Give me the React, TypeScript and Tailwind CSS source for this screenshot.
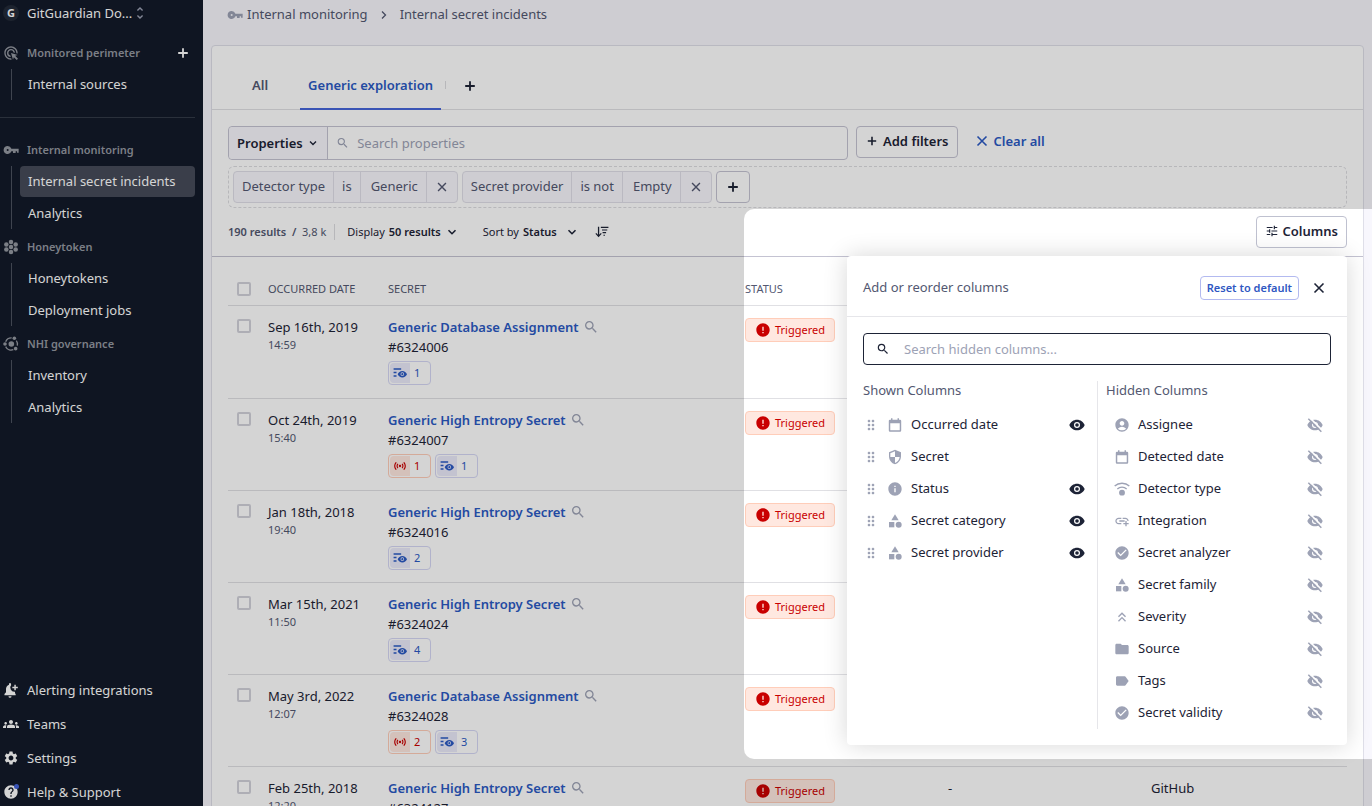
import { useState, type ComponentType, type ReactNode } from "react";
import clsx from "clsx";
import {
  MdAccountCircle,
  MdAddLink,
  MdAdsClick,
  MdCategory,
  MdCheckCircle,
  MdDragIndicator,
  MdError,
  MdFolder,
  MdGroups,
  MdHelp,
  MdInfo,
  MdKeyboardDoubleArrowUp,
  MdLabel,
  MdSearch,
  MdSecurity,
  MdSensors,
  MdSettings,
  MdTune,
  MdUnfoldMore,
} from "react-icons/md";

type IconType = ComponentType<{ className?: string }>;

// ─── Custom icons ────────────────────────────────────────────────────────────

function PlusIcon({ className }: { className?: string }) {
  return (
    <svg viewBox="0 0 16 16" stroke="currentColor" strokeWidth="1.8" className={className}>
      <path d="M8 3.200v9.600M3.200 8h9.600" />
    </svg>
  );
}

function CrossIcon({ className }: { className?: string }) {
  return (
    <svg viewBox="0 0 16 16" stroke="currentColor" strokeWidth="1.600" className={className}>
      <path d="M3.500 3.500l9 9M12.500 3.500l-9 9" />
    </svg>
  );
}

function ChevronDownIcon({ className }: { className?: string }) {
  return (
    <svg viewBox="0 0 16 16" fill="none" stroke="currentColor" strokeWidth="1.800" className={className}>
      <path d="M4 6l4 4 4-4" />
    </svg>
  );
}

function ChevronRightIcon({ className }: { className?: string }) {
  return (
    <svg viewBox="0 0 16 16" fill="none" stroke="currentColor" strokeWidth="1.300" className={className}>
      <path d="M6 4.500L9.500 8 6 11.500" />
    </svg>
  );
}

function KeyIcon({ className }: { className?: string }) {
  return (
    <svg viewBox="0 0 24 24" fill="currentColor" className={className}>
      <path
        fillRule="evenodd"
        d="M7 6a6 6 0 1 0 5.600 8H15v2.500h4V14h2v2h2.500V10H12.600A6 6 0 0 0 7 6zm0 7.500a1.500 1.500 0 1 1 0-3 1.500 1.500 0 0 1 0 3z"
      />
    </svg>
  );
}

function CalendarIcon({ className }: { className?: string }) {
  return (
    <svg viewBox="0 0 24 24" fill="currentColor" className={className}>
      <path
        fillRule="evenodd"
        d="M6 2h2.200v2h7.600V2H18v2h1.500A1.800 1.800 0 0 1 21.300 5.800v14.400a1.800 1.800 0 0 1-1.800 1.800h-15a1.800 1.800 0 0 1-1.800-1.800V5.800A1.800 1.800 0 0 1 4.500 4H6zM4.900 9.500v10.300h14.200V9.500z"
      />
    </svg>
  );
}

function EyeIcon({ className }: { className?: string }) {
  return (
    <svg viewBox="0 0 24 24" fill="currentColor" className={className}>
      <path
        fillRule="evenodd"
        d="M12 4C6.800 4 2.300 7.200.5 12c1.800 4.800 6.300 8 11.500 8s9.700-3.200 11.500-8C21.700 7.200 17.200 4 12 4zm0 12.500a4.500 4.500 0 1 1 0-9 4.500 4.500 0 0 1 0 9z"
      />
      <circle cx="12" cy="12" r="2.700" />
    </svg>
  );
}

function EyeOffIcon({ className }: { className?: string }) {
  return (
    <svg viewBox="0 0 24 24" fill="none" className={className}>
      <path
        fill="currentColor"
        fillRule="evenodd"
        d="M12 4C6.800 4 2.300 7.200.5 12c1.800 4.800 6.300 8 11.500 8s9.700-3.200 11.500-8C21.700 7.200 17.200 4 12 4zm0 12.500a4.500 4.500 0 1 1 0-9 4.500 4.500 0 0 1 0 9z"
      />
      <circle cx="12" cy="12" r="2.700" fill="currentColor" />
      <path d="M3.500.5l20 20" stroke="#fff" strokeWidth="2.400" />
      <path d="M2 2.500l19.500 19.500" stroke="currentColor" strokeWidth="2.200" />
    </svg>
  );
}

function HoneycombIcon({ className }: { className?: string }) {
  return (
    <svg viewBox="0 0 24 24" fill="currentColor" className={className}>
      <circle cx="12" cy="12" r="3.4" />
      <circle cx="12" cy="4.4" r="3.4" />
      <circle cx="12" cy="19.6" r="3.4" />
      <circle cx="5" cy="8.2" r="3.4" />
      <circle cx="19" cy="8.2" r="3.4" />
      <circle cx="5" cy="15.8" r="3.4" />
      <circle cx="19" cy="15.8" r="3.4" />
    </svg>
  );
}

function OrbitIcon({ className }: { className?: string }) {
  return (
    <svg viewBox="0 0 24 24" fill="none" stroke="currentColor" strokeWidth="2" className={className}>
      <path d="M4 8.500A9.300 9.300 0 0 1 13 2.800M20 7A9.300 9.300 0 0 1 21.500 14.500M15.500 20.600A9.300 9.300 0 0 1 4 16" />
      <g fill="currentColor" stroke="none">
        <circle cx="12.5" cy="12" r="4.2" />
        <circle cx="17" cy="3.400" r="2.700" />
        <circle cx="3" cy="12" r="2.700" />
        <circle cx="19" cy="19" r="2.700" />
      </g>
    </svg>
  );
}

function BellPlusIcon({ className }: { className?: string }) {
  return (
    <svg viewBox="0 0 24 24" fill="currentColor" className={className}>
      <path d="M10.500 23.500a2.300 2.300 0 0 0 2.300-2.300H8.200a2.300 2.300 0 0 0 2.300 2.300zM18 14.500A6.200 6.200 0 0 1 12.500 4.200L12 4V3a1.500 1.500 0 0 0-3 0v1C6 5 4.500 7.500 4.500 10.500V15.500L2.200 18V20H19V18l-1-1z" />
      <path d="M17 4h2.200v3h3v2.200h-3v3H17v-3h-3V7h3z" />
    </svg>
  );
}

function SortDescIcon({ className }: { className?: string }) {
  return (
    <svg viewBox="0 0 24 24" fill="currentColor" className={className}>
      <path d="M5 3h2.200v13.500L10 13.700l1.500 1.500L6.100 21 .7 15.200l1.500-1.500L5 16.500z" />
      <path d="M10 3h13v2H10zM12 7.500h9v2h-9zM13 12h6v2h-6zM14.500 16.500h2.500v2h-2.500z" />
    </svg>
  );
}

function ListEyeIcon({ className }: { className?: string }) {
  return (
    <svg viewBox="0 0 24 24" fill="currentColor" className={className}>
      <path d="M1 4h13v2.400H1zM1 10h5v2.400H1zM1 16h5v2.400H1z" />
      <path
        fillRule="evenodd"
        d="M16 8.500c-3.600 0-6.700 2.300-8 5.500 1.300 3.200 4.400 5.500 8 5.500s6.700-2.300 8-5.500c-1.300-3.200-4.400-5.500-8-5.500zm0 8.600a3.100 3.100 0 1 1 0-6.200 3.100 3.100 0 0 1 0 6.200z"
      />
      <circle cx="16" cy="14" r="1.800" />
    </svg>
  );
}

function DetectorIcon({ className }: { className?: string }) {
  return (
    <svg viewBox="0 0 24 24" fill="none" stroke="currentColor" strokeWidth="2" className={className}>
      <path d="M1 7.500C7 2 17 2 23 7.500M5 12c4-3.600 10-3.600 14 0" />
      <circle cx="12" cy="17.500" r="4.400" fill="currentColor" stroke="none" />
    </svg>
  );
}

// ─── Data ────────────────────────────────────────────────────────────────────

const SECTIONS: { title: string; icon: IconType; items: string[] }[] = [
  { title: "Internal monitoring", icon: KeyIcon, items: ["Internal secret incidents", "Analytics"] },
  { title: "Honeytoken", icon: HoneycombIcon, items: ["Honeytokens", "Deployment jobs"] },
  { title: "NHI governance", icon: OrbitIcon, items: ["Inventory", "Analytics"] },
];

const FOOTER_LINKS: { label: string; icon: IconType; dot?: boolean }[] = [
  { label: "Alerting integrations", icon: BellPlusIcon },
  { label: "Teams", icon: MdGroups },
  { label: "Settings", icon: MdSettings },
  { label: "Help & Support", icon: MdHelp, dot: true },
];

const INCIDENTS: {
  date: string;
  time: string;
  name: string;
  id: string;
  leaks?: number;
  seen?: number;
  category?: string;
  provider?: string;
}[] = [
  { date: "Sep 16th, 2019", time: "14:59", name: "Generic Database Assignment", id: "#6324006", seen: 1 },
  { date: "Oct 24th, 2019", time: "15:40", name: "Generic High Entropy Secret", id: "#6324007", leaks: 1, seen: 1 },
  { date: "Jan 18th, 2018", time: "19:40", name: "Generic High Entropy Secret", id: "#6324016", seen: 2 },
  { date: "Mar 15th, 2021", time: "11:50", name: "Generic High Entropy Secret", id: "#6324024", seen: 4 },
  { date: "May 3rd, 2022", time: "12:07", name: "Generic Database Assignment", id: "#6324028", leaks: 2, seen: 3 },
  {
    date: "Feb 25th, 2018",
    time: "12:20",
    name: "Generic High Entropy Secret",
    id: "#6324127",
    category: "-",
    provider: "GitHub",
  },
];

const SHOWN_COLUMNS: { label: string; icon: IconType; locked?: boolean }[] = [
  { label: "Occurred date", icon: CalendarIcon },
  { label: "Secret", icon: MdSecurity, locked: true },
  { label: "Status", icon: MdInfo },
  { label: "Secret category", icon: MdCategory },
  { label: "Secret provider", icon: MdCategory },
];

const HIDDEN_COLUMNS: { label: string; icon: IconType }[] = [
  { label: "Assignee", icon: MdAccountCircle },
  { label: "Detected date", icon: CalendarIcon },
  { label: "Detector type", icon: DetectorIcon },
  { label: "Integration", icon: MdAddLink },
  { label: "Secret analyzer", icon: MdCheckCircle },
  { label: "Secret family", icon: MdCategory },
  { label: "Severity", icon: MdKeyboardDoubleArrowUp },
  { label: "Source", icon: MdFolder },
  { label: "Tags", icon: MdLabel },
  { label: "Secret validity", icon: MdCheckCircle },
];

// ─── Sidebar ─────────────────────────────────────────────────────────────────

function SectionHeader({ icon: Icon, children }: { icon: IconType; children: ReactNode }) {
  return (
    <div className="flex h-[34px] items-center gap-2 pt-[2px] pl-[3px] text-[11px] font-semibold text-[#9599a2]">
      <Icon className="size-4 shrink-0" />
      {children}
    </div>
  );
}

function NavItems({ items, active }: { items: string[]; active?: string }) {
  return (
    <ul className="ml-[11px] flex flex-col gap-px border-l border-[#4c5260] pl-2">
      {items.map((item) => (
        <li key={item}>
          <a
            href="#"
            className={clsx(
              "flex h-[31px] items-center rounded px-2 pb-[2px]",
              item === active && "bg-[#464b59]",
            )}
          >
            {item}
          </a>
        </li>
      ))}
    </ul>
  );
}

function Sidebar() {
  return (
    <aside className="flex w-[203px] shrink-0 flex-col bg-[#131a29] pr-2 text-white">
      <button type="button" className="flex h-[26px] shrink-0 items-center pl-[3px]">
        <span className="flex size-4 items-center justify-center rounded-full bg-[#242b39] text-[11px] font-bold">
          G
        </span>
        <span className="ml-2">GitGuardian Do...</span>
        <MdUnfoldMore className="size-4 text-[#9da2b5]" />
      </button>

      <nav className="mt-[9px]">
        <div className="flex items-center justify-between pr-1">
          <SectionHeader icon={MdAdsClick}>Monitored perimeter</SectionHeader>
          <button type="button" aria-label="Add perimeter" className="pt-[2px]">
            <PlusIcon className="size-4" />
          </button>
        </div>
        <NavItems items={["Internal sources"]} />
        <hr className="mt-[17px] mb-[14px] border-[#333a48]" />
        {SECTIONS.map(({ title, icon, items }) => (
          <section key={title}>
            <SectionHeader icon={icon}>{title}</SectionHeader>
            <NavItems items={items} active="Internal secret incidents" />
          </section>
        ))}
      </nav>

      <ul className="-mb-[3px] mt-auto">
        {FOOTER_LINKS.map(({ label, icon: Icon, dot }) => (
          <li key={label}>
            <a href="#" className="flex h-[34px] items-center gap-2 pl-[3px]">
              <span className="relative">
                <Icon className="size-4" />
                {dot && <span className="absolute top-0 right-0 size-[5px] rounded-full bg-[#4666da]" />}
              </span>
              {label}
            </a>
          </li>
        ))}
      </ul>
    </aside>
  );
}

// ─── Filters ─────────────────────────────────────────────────────────────────

function FilterChip({ field, operator, value }: { field: string; operator: string; value: string }) {
  return (
    <div className="flex h-8 divide-x divide-[#e0dfe8] rounded border border-[#e0dfe8] bg-[#f8f7fd] text-[#535871]">
      <span className="flex items-center px-2 pb-[2px]">{field}</span>
      <span className="flex items-center px-2 pb-[2px]">{operator}</span>
      <span className="flex items-center pr-2 pb-[2px] pl-[10px]">{value}</span>
      <button type="button" aria-label="Remove filter" className="px-2">
        <CrossIcon className="size-[14px]" />
      </button>
    </div>
  );
}

function Filters() {
  return (
    <div className="px-4 pt-4">
      <div className="flex gap-2">
        <div className="flex h-[34px] w-[620px] rounded border border-[#c4c3d2]">
          <button
            type="button"
            className="flex items-center gap-1 rounded-l border-r border-[#c4c3d2] bg-[#f8f7fd] px-2 font-semibold"
          >
            Properties
            <ChevronDownIcon className="size-3" />
          </button>
          <div className="flex flex-1 items-center gap-2 px-2">
            <MdSearch className="size-[14px] text-[#9da2b5]" />
            <input
              type="text"
              aria-label="Search properties"
              placeholder="Search properties"
              className="w-full outline-none placeholder:text-[#9da2b5]"
            />
          </div>
        </div>
        <button
          type="button"
          className="flex h-8 items-center gap-1 rounded border border-[#c4c3d2] px-2 pb-[2px] font-semibold"
        >
          <PlusIcon className="size-[14px]" />
          Add filters
        </button>
        <button type="button" className="flex h-8 items-center gap-1 px-2 pb-[2px] font-semibold text-[#2b59c3]">
          <CrossIcon className="size-4" />
          Clear all
        </button>
      </div>

      <div className="mt-[6px] flex gap-1 rounded-md border border-dashed border-[#dcdce0] p-1">
        <FilterChip field="Detector type" operator="is" value="Generic" />
        <FilterChip field="Secret provider" operator="is not" value="Empty" />
        <button
          type="button"
          aria-label="Add filter"
          className="flex h-8 w-[34px] items-center justify-center rounded border border-[#c4c3d2]"
        >
          <PlusIcon className="size-4" />
        </button>
      </div>
    </div>
  );
}

// ─── Column picker ───────────────────────────────────────────────────────────

function ColumnsPanel() {
  const [query, setQuery] = useState("");
  const hidden = HIDDEN_COLUMNS.filter((c) => c.label.toLowerCase().includes(query.toLowerCase()));

  return (
    <div className="absolute top-10 right-0 z-10 w-[500px] rounded bg-white shadow-[0_0_24px_rgba(0,0,0,0.16)]">
      <div className="flex h-[61px] items-center border-b border-[#e6e6ea] px-4 pt-1">
        <span className="mr-auto pb-[2px] text-[#535871]">Add or reorder columns</span>
        <button
          type="button"
          className="h-6 rounded border border-[#b3baf0] px-[6px] text-[11px] font-semibold text-[#2f57c2]"
        >
          Reset to default
        </button>
        <button type="button" aria-label="Close" className="ml-3 pr-1">
          <CrossIcon className="size-4" />
        </button>
      </div>

      <div className="p-4">
        <div className="flex h-8 items-center gap-[14px] rounded border border-[#1d2336] px-3">
          <MdSearch className="size-[14px] shrink-0" />
          <input
            type="text"
            aria-label="Search hidden columns"
            value={query}
            onChange={(e) => setQuery(e.target.value)}
            placeholder="Search hidden columns..."
            className="w-full outline-none placeholder:text-[#9da2b5]"
          />
        </div>

        <div className="mt-4 flex">
          <div className="w-[235px] border-r border-[#e6e6ea] pr-3">
            <h3 className="pb-[10px] leading-[18px] text-[#535871]">Shown Columns</h3>
            <ul>
              {SHOWN_COLUMNS.map(({ label, icon: Icon, locked }) => (
                <li key={label} className="flex h-8 items-center">
                  <MdDragIndicator className="size-4 text-[#9da2b5]" />
                  <Icon className="mr-2 ml-2 size-4 text-[#9da2b5]" />
                  <span className="mr-auto pb-[2px]">{label}</span>
                  {!locked && (
                    <button type="button" aria-label={`Hide ${label}`}>
                      <EyeIcon className="size-4" />
                    </button>
                  )}
                </li>
              ))}
            </ul>
          </div>
          <div className="flex-1 pl-2">
            <h3 className="pb-[10px] leading-[18px] text-[#535871]">Hidden Columns</h3>
            <ul className="px-2">
              {hidden.map(({ label, icon: Icon }) => (
                <li key={label} className="flex h-8 items-center">
                  <Icon className="mr-2 size-4 text-[#9da2b5]" />
                  <span className="mr-auto pb-[2px]">{label}</span>
                  <button type="button" aria-label={`Show ${label}`}>
                    <EyeOffIcon className="size-4 text-[#9da2b5]" />
                  </button>
                </li>
              ))}
            </ul>
          </div>
        </div>
      </div>
    </div>
  );
}

function Toolbar() {
  return (
    <div className="flex h-[49px] items-center border-b border-[#c4c3d2] px-4 text-[11px]">
      <span className="font-semibold text-[#535871]">
        190 results&nbsp; /&nbsp; <span className="font-normal">3,8 k</span>
      </span>
      <span className="ml-2 h-4 border-l border-[#dcdce0]" />
      <button type="button" className="ml-3 flex items-center gap-1">
        Display <b className="font-semibold">50 results</b>
        <ChevronDownIcon className="size-[14px]" />
      </button>
      <button type="button" className="ml-6 flex items-center gap-1">
        Sort by <b className="font-semibold">Status</b>
        <ChevronDownIcon className="ml-1 size-[14px]" />
      </button>
      <button type="button" aria-label="Sort direction" className="ml-4">
        <SortDescIcon className="size-[14px]" />
      </button>

      <div className="relative ml-auto text-[13px]">
        <button
          type="button"
          className="flex h-8 items-center gap-1 rounded border border-[#bfc1d0] px-2 pb-[2px] font-semibold"
        >
          <MdTune className="size-[14px]" />
          Columns
        </button>
        <ColumnsPanel />
        {/* Spotlight: dims everything around the column picker */}
        <div className="pointer-events-none absolute -top-[7px] -right-10 z-20 h-[550px] w-[643px] rounded-[10px] shadow-[0_0_0_2000px_rgba(0,0,0,0.17)]" />
      </div>
    </div>
  );
}

// ─── Incident table ──────────────────────────────────────────────────────────

function CountTag({ icon: Icon, count, red }: { icon: IconType; count: number; red?: boolean }) {
  return (
    <span
      className={clsx(
        "flex h-6 w-[43px] items-center rounded border p-px text-[11px]",
        red ? "border-[#ffcdb9] text-[#c90000]" : "border-[#d5d7f5] text-[#2b59c3]",
      )}
    >
      <span
        className={clsx(
          "flex h-full w-5 items-center justify-center rounded-l-sm",
          red ? "bg-[#ffe8e0]" : "bg-[#ebebfa]",
        )}
      >
        <Icon className="size-[14px]" />
      </span>
      <span className="ml-1">{count}</span>
    </span>
  );
}

function Checkbox({ label }: { label: string }) {
  return (
    <input
      type="checkbox"
      aria-label={label}
      className="ml-[9px] block size-[14px] appearance-none rounded-[2px] border-2 border-[#d2d2da] checked:bg-[#4666da]"
    />
  );
}

function IncidentTable() {
  return (
    <div className="px-4 pt-4">
      <table className="w-full table-fixed text-left">
        <colgroup>
          <col className="w-10" />
          <col className="w-[120px]" />
          <col className="w-[357px]" />
          <col className="w-[203px]" />
          <col className="w-[203px]" />
          <col />
        </colgroup>
        <thead>
          <tr className="h-8 border-b border-[#e0e0e4] text-[11px] text-[#535871] uppercase">
            <th>
              <Checkbox label="Select all" />
            </th>
            <th className="font-normal">Occurred date</th>
            <th className="font-normal">Secret</th>
            <th className="font-normal">Status</th>
            <th aria-label="Secret category" />
            <th aria-label="Secret provider" />
          </tr>
        </thead>
        <tbody>
          {INCIDENTS.map((incident) => (
            <tr key={incident.id} className="h-[92px] border-b border-[#e0e0e4] align-top first:h-[93px]">
              <td className="pt-[13px]">
                <Checkbox label={`Select ${incident.id}`} />
              </td>
              <td className="pt-[11px]">
                <div className="leading-5">{incident.date}</div>
                <div className="text-[11px] leading-4 text-[#535871]">{incident.time}</div>
              </td>
              <td className="pt-[11px] pb-2">
                <div className="flex items-center gap-1 leading-5">
                  <a href="#" className="font-semibold text-[#2b59c3]">
                    {incident.name}
                  </a>
                  <MdSearch className="size-4 text-[#9da2b5]" />
                </div>
                <div className="leading-5">{incident.id}</div>
                <div className="mt-1 flex gap-1">
                  {incident.leaks && <CountTag icon={MdSensors} count={incident.leaks} red />}
                  {incident.seen && <CountTag icon={ListEyeIcon} count={incident.seen} />}
                </div>
              </td>
              <td className="pt-3">
                <span className="inline-flex h-6 items-center gap-1 rounded border border-[#ffcdb9] bg-[#ffe8e0] px-[9px] text-[11px] text-[#c90000]">
                  <MdError className="size-4" />
                  Triggered
                </span>
              </td>
              <td className="pt-[11px] leading-5">{incident.category}</td>
              <td className="pt-[11px] leading-5">{incident.provider}</td>
            </tr>
          ))}
        </tbody>
      </table>
    </div>
  );
}

// ─── Page ────────────────────────────────────────────────────────────────────

export default function App() {
  return (
    <div className="flex h-screen overflow-hidden font-['Noto_Sans',sans-serif] text-[13px] leading-5 text-[#1d2336]">
      <Sidebar />
      <main className="min-w-0 flex-1 bg-[#f8f7fd] px-2">
        <nav className="flex h-[45px] items-start gap-1 pt-1 pl-4 text-[#535871]">
          <KeyIcon className="mt-[3px] size-4 text-[#9da2b5]" />
          <a href="#">Internal monitoring</a>
          <ChevronRightIcon className="mx-1 mt-[3px] size-4" />
          <a href="#">Internal secret incidents</a>
        </nav>

        <div className="rounded border border-[#dfdfe9] bg-white">
          <div className="flex h-16 items-end border-b border-[#e0e0e4] pl-8 font-semibold">
            <button type="button" className="h-[47px] px-2 pb-[2px] text-[#535871]">
              All
            </button>
            <button
              type="button"
              className="-mb-px ml-6 h-12 border-b-2 border-[#4666da] px-2 text-[#2b59c3]"
            >
              Generic exploration
            </button>
            <span className="mb-5 ml-1 h-2 border-l border-[#dcdce0]" />
            <button type="button" aria-label="Add view" className="ml-4 h-[47px]">
              <PlusIcon className="size-4" />
            </button>
          </div>
          <Filters />
          <Toolbar />
          <IncidentTable />
        </div>
      </main>
    </div>
  );
}
